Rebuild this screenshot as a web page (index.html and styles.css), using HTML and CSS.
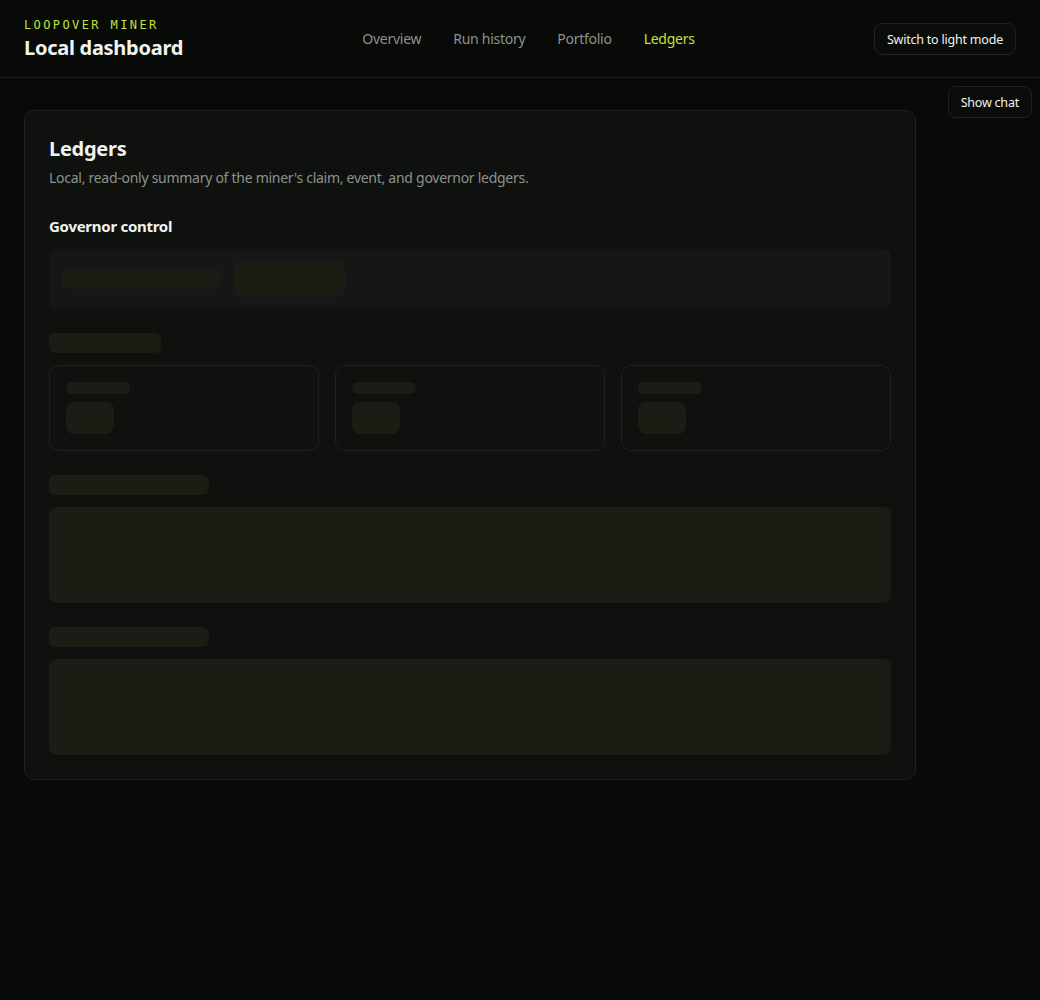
FILE: index.html
```html
<!DOCTYPE html>
<html lang="en">
<head>
    <meta charset="UTF-8">
    <meta name="viewport" content="width=device-width, initial-scale=1.0">
    <title>Local dashboard</title>

    <link rel="stylesheet" href="styles.css">
</head>
<body>
    <header class="topbar">
        <div class="brand">
            <div class="brand-tag">LOOPOVER MINER</div>
            <div class="brand-title">Local dashboard</div>
        </div>

        <nav class="nav">
            <a href="#">Overview</a>
            <a href="#">Run history</a>
            <a href="#">Portfolio</a>
            <a href="#" class="active">Ledgers</a>
        </nav>

        <button class="btn">Switch to light mode</button>
    </header>

    <!-- chat toggle floats over the page -->
    <button class="btn chat-toggle">Show chat</button>

    <main class="main">
        <section class="card">
            <h1>Ledgers</h1>
            <p class="sub">Local, read-only summary of the miner's claim, event, and governor ledgers.</p>

            <h2>Governor control</h2>

            <div class="gov-box">
                <span class="sk sk-line w160"></span>
                <span class="sk sk-btn"></span>
            </div>

            <span class="sk sk-line w112 block-gap"></span>

            <div class="stats">
                <div class="stat">
                    <span class="sk sk-small"></span>
                    <span class="sk sk-value"></span>
                </div>
                <div class="stat">
                    <span class="sk sk-small"></span>
                    <span class="sk sk-value"></span>
                </div>
                <div class="stat">
                    <span class="sk sk-small"></span>
                    <span class="sk sk-value"></span>
                </div>
            </div>

            <span class="sk sk-line w160 block-gap"></span>
            <div class="sk sk-table"></div>

            <span class="sk sk-line w160 block-gap"></span>
            <div class="sk sk-table"></div>
        </section>
    </main>
</body>
</html>
```

FILE: styles.css
```css
* {box-sizing: border-box;}

body {
    margin: 0;
    min-height: 1000px;
    background: #080a08;
    color: #f1f3ee;
    font-family: "Noto Sans", "Open Sans", sans-serif;
    letter-spacing: -0.017em;
}

.topbar {
    display: flex;
    justify-content: space-between;
    align-items: center;
    padding: 17px 24px 15px;
    border-bottom: 1px solid #1c1e1c;
}

.brand-tag {
    font-family: "DejaVu Sans Mono", "Liberation Mono", monospace;
    font-size: 12px;
    line-height: 16px;
    letter-spacing: 0.2em;
    color: #c4e03a;
}

.brand-title {
    margin-top: 1px;
    font-size: 20px;
    line-height: 28px;
    font-weight: 700;
}

.nav {
    display: flex;
    gap: 32px;
    margin-bottom: 3px;
    font-size: 14px;
}

.nav a {
    color: #8b938d;
    text-decoration: none;
}

.nav a.active {color: #c4e03a;}

.btn {
    height: 32px;
    margin-bottom: 1px;
    padding: 0 12px;
    background: #0a0c0a;
    border: 1px solid #202220;
    border-radius: 8px;
    color: #f1f3ee;
    font-family: "Noto Sans", sans-serif;
    font-size: 12.5px;
    letter-spacing: -0.017em;
}

.chat-toggle {
    position: fixed;
    top: 86px;
    right: 8px;
}

.main {padding: 32px 124px 24px 24px;}

.card {
    display: flex;
    flex-direction: column;
    align-items: flex-start;
    padding: 24px;
    background: #0f110f;
    border: 1px solid #1e201e;
    border-radius: 10px;
}

h1 {
    margin: 0;
    font-size: 20px;
    line-height: 28px;
    font-weight: 700;
}

.sub {
    margin: 5px 0 0;
    font-size: 14px;
    line-height: 20px;
    color: #8b938d;
}

h2 {
    margin: 28px 0 13px;
    font-size: 15px;
    line-height: 20px;
    font-weight: 700;
}

.sk {
    display: block;
    background: #1b1d14;
    border-radius: 6px;
}

.gov-box {
    display: flex;
    align-items: center;
    gap: 12px;
    align-self: stretch;
    padding: 12px;
    background: #151615;
    border-radius: 6px;
}

.sk-line {height: 20px;}

.w160 {width: 160px;}

.w112 {width: 112px;}

.sk-btn {
    width: 112px;
    height: 36px;
    border-radius: 8px;
}

.block-gap {margin: 24px 0 12px;}

.stats {
    display: grid;
    grid-template-columns: repeat(3, 1fr);
    gap: 16px;
    align-self: stretch;
}

.stat {
    height: 86px;
    padding: 16px;
    border: 1px solid #1f211f;
    border-radius: 10px;
}

.sk-small {
    width: 64px;
    height: 12px;
}

.sk-value {
    width: 48px;
    height: 32px;
    margin-top: 8px;
    border-radius: 8px;
}

.sk-table {
    align-self: stretch;
    height: 96px;
    border-radius: 8px;
}
```
